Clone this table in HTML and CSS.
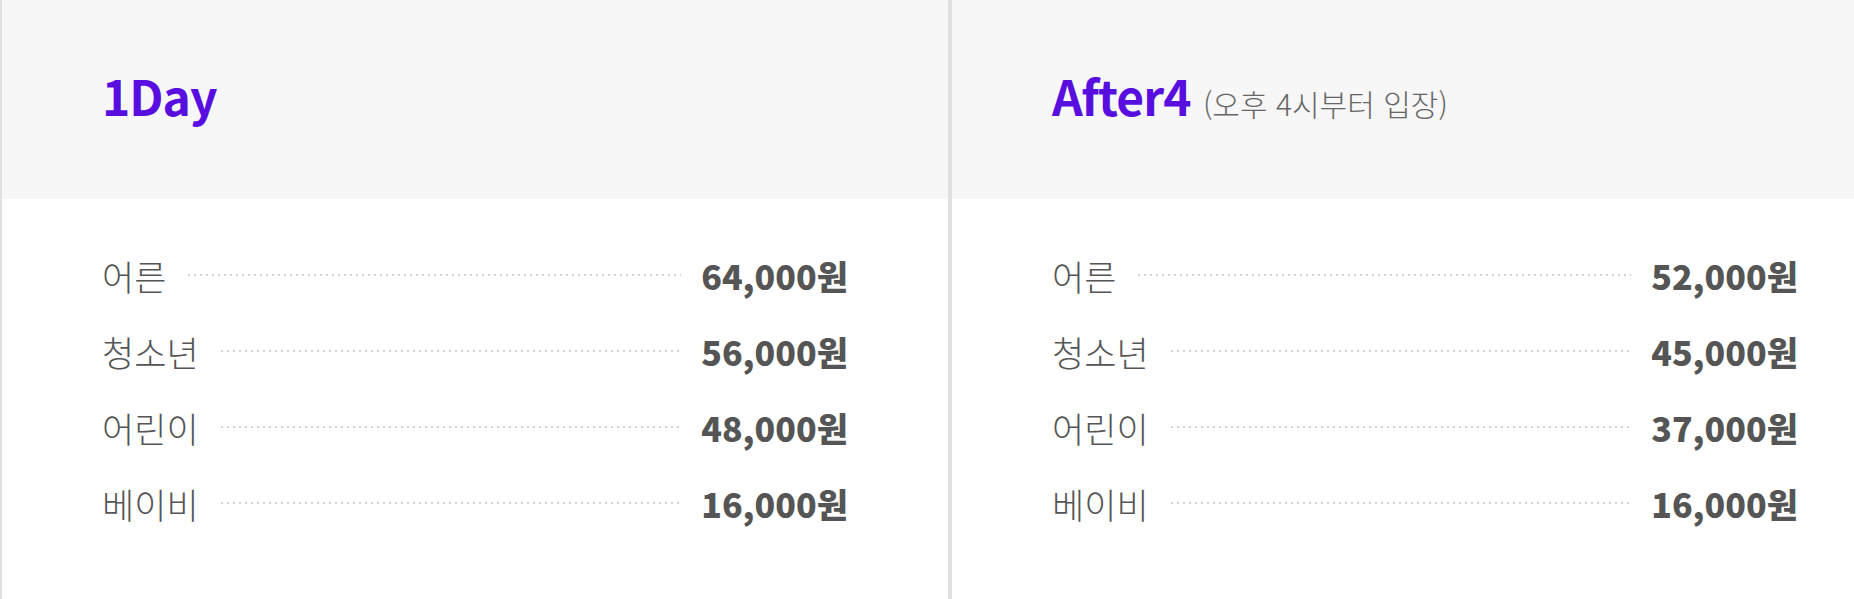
FILE: index.html
```html
<!DOCTYPE html>
<html lang="ko">
<head>
    <meta charset="UTF-8">
    <meta name="viewport" content="width=device-width, initial-scale=1.0">
    <title>이용요금</title>
    <link rel="stylesheet" href="styles.css">
</head>
<body>

    <!-- 요금표 -->
    <div class="price-wrap">

        <!-- 1Day -->
        <div class="price-card">
            <div class="price-head">
                <h3>1Day</h3>
            </div>
            <ul class="price-list">
                <li><span class="name">어른</span><span class="dots"></span><strong>64,000원</strong></li>
                <li><span class="name">청소년</span><span class="dots"></span><strong>56,000원</strong></li>
                <li><span class="name">어린이</span><span class="dots"></span><strong>48,000원</strong></li>
                <li><span class="name">베이비</span><span class="dots"></span><strong>16,000원</strong></li>
            </ul>
        </div>

        <!-- After4 -->
        <div class="price-card">
            <div class="price-head">
                <h3>After4 <small>(오후 4시부터 입장)</small></h3>
            </div>
            <ul class="price-list">
                <li><span class="name">어른</span><span class="dots"></span><strong>52,000원</strong></li>
                <li><span class="name">청소년</span><span class="dots"></span><strong>45,000원</strong></li>
                <li><span class="name">어린이</span><span class="dots"></span><strong>37,000원</strong></li>
                <li><span class="name">베이비</span><span class="dots"></span><strong>16,000원</strong></li>
            </ul>
        </div>

    </div>

</body>
</html>
```

FILE: styles.css
```css
body {
    margin: 0;
    background-color: #fff;
    font-family: "Noto Sans CJK KR", "Noto Sans", sans-serif;
    overflow: hidden;
}

/* 요금표 컨테이너 */
.price-wrap {
    display: flex;
    width: 1900px;
}

.price-card {
    flex: 0 0 950px;
    box-sizing: border-box;
    border-left: 2px solid #e0e0e0;
    border-right: 2px solid #e0e0e0;
    min-height: 599px;
}

/* 상단 타이틀 영역 */
.price-head {
    height: 199px;
    box-sizing: border-box;
    display: flex;
    align-items: center;
    padding: 0 100px 9px;
    background-color: #f7f7f7;
}

.price-head h3 {
    margin: 0;
    font-size: 48px;
    font-weight: 700;
    line-height: 1;
    color: #590ee0;
    letter-spacing: -1px;
}

.price-head h3 small {
    font-size: 30px;
    font-weight: 300;
    color: #666;
    letter-spacing: 0;
}

/* 요금 목록 */
.price-list {
    list-style: none;
    margin: 0;
    padding: 38px 100px 0;
}

.price-list li {
    display: flex;
    align-items: center;
    height: 76px;
}

.price-list .name {
    font-size: 35px;
    font-weight: 300;
    color: #555;
}

.price-list .dots {
    flex: 1;
    height: 2px;
    margin: 0 20px 1px 22px;
    background-image: linear-gradient(to right, #d4d4d4 2px, transparent 2px);
    background-size: 6px 2px;
    background-repeat: repeat-x;
}

.price-list strong {
    font-size: 34px;
    font-weight: 900;
    color: #555;
}
```
